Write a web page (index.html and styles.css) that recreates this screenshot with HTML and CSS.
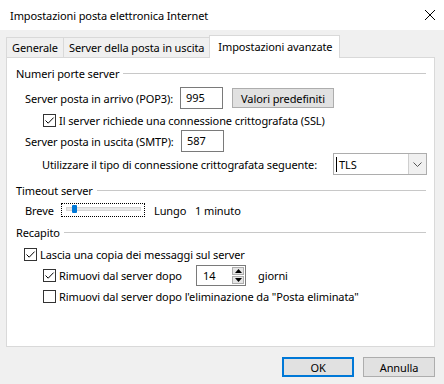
FILE: index.html
```html
<!DOCTYPE html>
<html lang="it">
<head>
    <meta charset="UTF-8">
    <title>Impostazioni posta elettronica Internet</title>
    <link rel="stylesheet" href="styles.css">
</head>
<body>

<div class="window">
    <div class="titlebar">
        <span class="title">Impostazioni posta elettronica Internet</span>
        <svg class="close" width="12" height="12" viewBox="0 0 12 12"><path d="M1 1 L11 11 M11 1 L1 11" stroke="#000" stroke-width="1"/></svg>
    </div>

    <div class="tabs">
        <div class="tab">Generale</div>
        <div class="tab">Server della posta in uscita</div>
        <div class="tab active">Impostazioni avanzate</div>
    </div>

    <div class="panel">
        <div class="group mt7"><span>Numeri porte server</span><div class="line"></div></div>

        <div class="row field indent mt6">
            <span class="lbl-pop">Server posta in arrivo (POP3):</span>
            <div class="textbox">995</div>
            <button class="btn btn-defaults">Valori predefiniti</button>
        </div>

        <div class="row check-row sub mt3">
            <span class="check"><svg width="11" height="11" viewBox="0 0 11 11"><path d="M1.5 5.5 L4.2 8.2 L9.6 2.6" fill="none" stroke="#000" stroke-width="1"/></svg></span>
            <span>Il server richiede una connessione crittografata (SSL)</span>
        </div>

        <div class="row field indent mt2">
            <span class="lbl-smtp">Server posta in uscita (SMTP):</span>
            <div class="textbox">587</div>
        </div>

        <div class="row field sub-text mt1">
            <span>Utilizzare il tipo di connessione crittografata seguente:</span>
            <div class="combo">
                <span class="combo-text"><i class="caret"></i>TLS</span>
                <span class="combo-btn"><svg width="9" height="5" viewBox="0 0 9 5"><path d="M0.5 0.5 L4.5 4.5 L8.5 0.5" fill="none" stroke="#555" stroke-width="1"/></svg></span>
            </div>
        </div>

        <div class="group mt7"><span>Timeout server</span><div class="line"></div></div>

        <div class="row check-row indent mt4">
            <span class="slider-lbl">Breve</span>
            <div class="slider">
                <div class="track"></div>
                <div class="thumb"></div>
            </div>
            <span class="lungo">Lungo</span>
            <span>1 minuto</span>
        </div>

        <div class="group mt6"><span>Recapito</span><div class="line"></div></div>

        <div class="row check-row keep mt6">
            <span class="check"><svg width="11" height="11" viewBox="0 0 11 11"><path d="M1.5 5.5 L4.2 8.2 L9.6 2.6" fill="none" stroke="#000" stroke-width="1"/></svg></span>
            <span>Lascia una copia dei messaggi sul server</span>
        </div>

        <div class="row field sub mt2">
            <span class="check"><svg width="11" height="11" viewBox="0 0 11 11"><path d="M1.5 5.5 L4.2 8.2 L9.6 2.6" fill="none" stroke="#000" stroke-width="1"/></svg></span>
            <span class="lbl-remove">Rimuovi dal server dopo</span>
            <div class="spinner">
                <span class="spin-value">14</span>
                <span class="spin-btns">
                    <span class="spin-btn"><svg width="7" height="4" viewBox="0 0 7 4"><path d="M0 4 L3.5 0 L7 4 Z" fill="#000"/></svg></span>
                    <span class="spin-btn"><svg width="7" height="4" viewBox="0 0 7 4"><path d="M0 0 L3.5 4 L7 0 Z" fill="#000"/></svg></span>
                </span>
            </div>
            <span class="giorni">giorni</span>
        </div>

        <div class="row check-row sub mt2">
            <span class="check"></span>
            <span>Rimuovi dal server dopo l'eliminazione da "Posta eliminata"</span>
        </div>
    </div>

    <div class="footer">
        <button class="btn btn-ok">OK</button>
        <button class="btn btn-cancel">Annulla</button>
    </div>
</div>

</body>
</html>
```

FILE: styles.css
```css
body {
    margin: 0;
    font-family: "Noto Sans", sans-serif;
    font-size: 11px;
    letter-spacing: -0.1px;
    color: #000;
    background-color: #f0f0f0;
}
.window {
    width: 444px;
    height: 384px;
    background-color: #f0f0f0;
    overflow: hidden;
    white-space: nowrap;
}
.titlebar {
    height: 30px;
    background-color: #fff;
    display: flex;
    align-items: center;
    padding: 0 8px 0 10px;
}
.title {
    flex: 1;
}
.close {
    margin-top: -1px;
}
.tabs {
    display: flex;
    align-items: flex-end;
    height: 22px;
    margin-top: 5px;
    padding-left: 6px;
}
.tab {
    height: 20px;
    line-height: 19px;
    box-sizing: border-box;
    padding: 0 5px;
    border: 1px solid #d9d9d9;
    border-bottom: none;
    border-right: none;
    background-color: #f0f0f0;
}
.tab.active {
    height: 23px;
    line-height: 21px;
    margin-bottom: -1px;
    background-color: #fff;
    border-right: 1px solid #d9d9d9;
    padding: 0 7px 0 8px;
    position: relative;
}
.panel {
    width: 429px;
    height: 290px;
    box-sizing: border-box;
    margin-left: 6px;
    border: 1px solid #d9d9d9;
    background-color: #fff;
    padding: 0 8px 0 9px;
}
.group {
    display: flex;
    align-items: center;
    height: 16px;
}
.group .line {
    flex: 1;
    height: 1px;
    background-color: #c8c8c8;
    margin-left: 4px;
}
.mt1 { margin-top: 1px; }
.mt2 { margin-top: 2px; }
.mt3 { margin-top: 3px; }
.mt4 { margin-top: 4px; }
.mt6 { margin-top: 6px; }
.mt7 { margin-top: 7px; }
.row {
    display: flex;
    align-items: center;
}
.row > * { flex-shrink: 0; }
.field { height: 22px; }
.check-row { height: 16px; }
.indent { margin-left: 9px; }
.sub { margin-left: 27px; }
.sub-text { margin-left: 26px; }
.keep { margin-left: 8px; }

.lbl-pop { width: 155px; }
.lbl-smtp { width: 156px; }
.textbox {
    width: 43px;
    height: 22px;
    box-sizing: border-box;
    border: 1px solid #7a7a7a;
    padding-left: 5px;
    line-height: 20px;
}
.btn {
    font-family: inherit;
    font-size: 11px;
    letter-spacing: -0.1px;
    color: #000;
    background-color: #e1e1e1;
    border: 1px solid #adadad;
    padding: 0;
    height: 20px;
    box-sizing: border-box;
}
.btn-defaults {
    width: 102px;
    margin-left: 9px;
}
.check {
    width: 13px;
    height: 13px;
    box-sizing: border-box;
    border: 1px solid #333;
    background-color: #fff;
    margin-right: 3px;
    display: flex;
    align-items: center;
    justify-content: center;
}
.combo {
    margin-left: auto;
    margin-right: -1px;
    width: 94px;
    height: 22px;
    box-sizing: border-box;
    border: 1px solid #adadad;
    display: flex;
    align-items: stretch;
}
.combo-text {
    flex: 1;
    display: flex;
    align-items: center;
    padding-left: 2px;
}
.caret {
    width: 1px;
    height: 15px;
    background-color: #000;
    margin-right: 2px;
}
.combo-btn {
    width: 17px;
    border-left: 1px solid #cfcfcf;
    background-color: #f0f0f0;
    display: flex;
    align-items: center;
    justify-content: center;
}
.slider-lbl { width: 36px; }
.slider {
    width: 84px;
    height: 14px;
    box-sizing: border-box;
    border: 1px dotted #000;
    position: relative;
}
.track {
    position: absolute;
    left: 4px;
    top: 3px;
    width: 75px;
    height: 4px;
    background-color: #e7e7e7;
    border: 1px solid #d6d6d6;
    box-sizing: border-box;
}
.thumb {
    position: absolute;
    left: 10px;
    top: 1px;
    width: 5px;
    height: 8px;
    border-radius: 1px;
    background-color: #0078d7;
}
.lungo {
    margin-left: 9px;
    width: 41px;
}
.lbl-remove { width: 137px; }
.spinner {
    width: 50px;
    height: 21px;
    box-sizing: border-box;
    border: 1px solid #7a7a7a;
    display: flex;
}
.spin-value {
    flex: 1;
    padding-left: 6px;
    line-height: 19px;
}
.spin-btns {
    width: 12px;
    display: flex;
    flex-direction: column;
    padding: 1px 1px 1px 0;
    gap: 1px;
}
.spin-btn {
    flex: 1;
    border: 1px solid #adadad;
    background-color: #e5e5e5;
    display: flex;
    align-items: center;
    justify-content: center;
}
.giorni { margin-left: 12px; }
.footer {
    display: flex;
    justify-content: flex-end;
    gap: 9px;
    padding-right: 9px;
    margin-top: 10px;
}
.btn-ok, .btn-cancel {
    width: 72px;
}
.btn-ok {
    border: 2px solid #0078d7;
}
```
